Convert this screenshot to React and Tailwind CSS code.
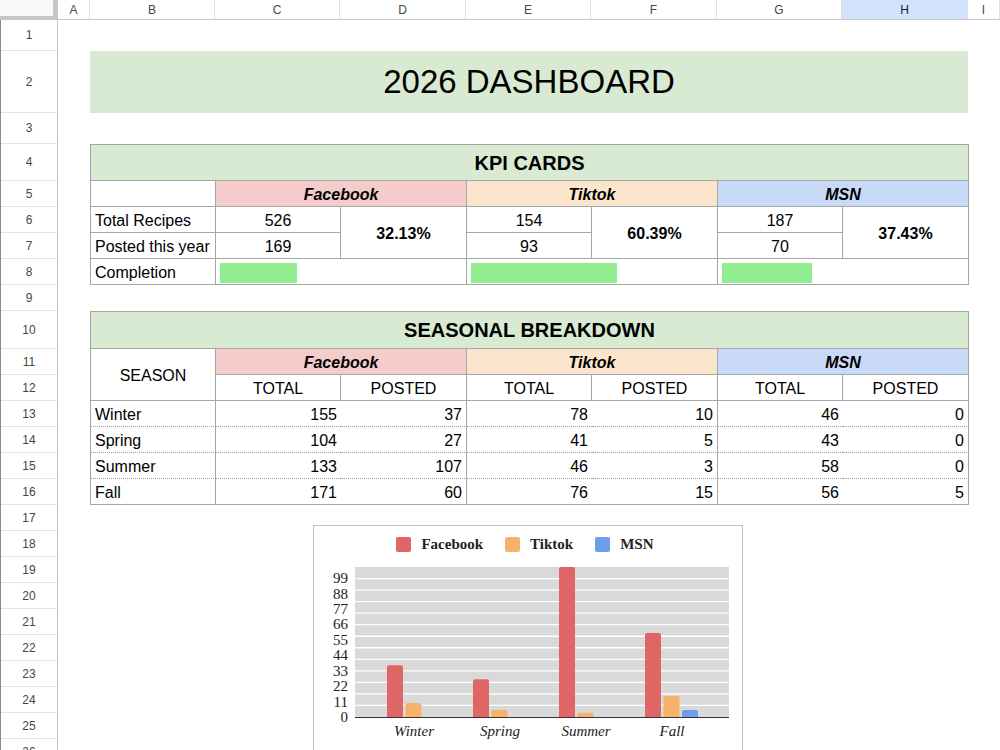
import React from "react";

const COLS = [
  ["A", 32],
  ["B", 125],
  ["C", 125],
  ["D", 126],
  ["E", 125],
  ["F", 126],
  ["G", 125],
  ["H", 126],
  ["I", 32],
];

const ROWS = [31, 62, 31, 37, 26, 26, 26, 26, 26, 38, 26, 26, 26, 26, 26, 26, 26, 26, 26, 26, 26, 26, 26, 26, 26, 26];

const PLATFORMS = [
  { name: "Facebook", bg: "bg-[#f4cccc]", total: 526, posted: 169, pct: "32.13%", ratio: 0.3213 },
  { name: "Tiktok", bg: "bg-[#fce5cd]", total: 154, posted: 93, pct: "60.39%", ratio: 0.6039 },
  { name: "MSN", bg: "bg-[#c9daf8]", total: 187, posted: 70, pct: "37.43%", ratio: 0.3743 },
];

const SEASONS = [
  ["Winter", 155, 37, 78, 10, 46, 0],
  ["Spring", 104, 27, 41, 5, 43, 0],
  ["Summer", 133, 107, 46, 3, 58, 0],
  ["Fall", 171, 60, 76, 15, 56, 5],
];

const SERIES = [
  { name: "Facebook", color: "#e06666", idx: 2 },
  { name: "Tiktok", color: "#f6b26b", idx: 4 },
  { name: "MSN", color: "#6d9eeb", idx: 6 },
];

const GRID_COLS = "grid grid-cols-[125px_125px_126px_125px_126px_125px_126px]";

function ColumnHeaders() {
  return (
    <div className="flex h-[20px] shrink-0">
      <div className="w-[58px] h-[20px] bg-[#f8f9fa] border-r-[5px] border-b-[4px] border-[#c4c7c5]" />
      <div className="flex border-b border-[#c4c7c5] flex-1">
        {COLS.map(([letter, w]) => (
          <div
            key={letter}
            style={{ width: w }}
            className={`shrink-0 flex items-center justify-center border-r border-[#e0e0e0] text-[12px] ${
              letter === "H" ? "bg-[#d3e3fd] text-[#041e49]" : "text-[#444746]"
            }`}
          >
            {letter}
          </div>
        ))}
      </div>
    </div>
  );
}

function RowHeaders() {
  return (
    <div className="w-[58px] shrink-0 border-l border-r border-l-[#8a8a8a] border-r-[#c4c7c5]">
      {ROWS.map((h, i) => (
        <div
          key={i}
          style={{ height: h }}
          className="flex items-center justify-center border-b border-[#e1e1e1] text-[12px] text-[#444746]"
        >
          {i + 1}
        </div>
      ))}
    </div>
  );
}

function KpiCards() {
  return (
    <div className={`${GRID_COLS} grid-rows-[36px_26px_26px_26px_26px] w-[879px] border-l border-t border-[#a6a6a6] text-[16px]`}>
      <div className="col-span-7 flex items-center justify-center bg-[#d9ead3] border-r border-b border-[#a6a6a6] text-[20px] font-bold">
        KPI CARDS
      </div>

      <div className="border-r border-b border-[#a6a6a6]" />
      {PLATFORMS.map((p) => (
        <div
          key={p.name}
          className={`col-span-2 flex items-center justify-center pt-[2px] ${p.bg} border-r border-b border-[#a6a6a6] font-bold italic`}
        >
          {p.name}
        </div>
      ))}

      <div className="flex items-center pl-[4px] pt-[2px] border-r border-b border-[#a6a6a6]">Total Recipes</div>
      {PLATFORMS.map((p) => (
        <React.Fragment key={p.name}>
          <div className="flex items-center justify-center pt-[2px] border-r border-b border-[#a6a6a6]">{p.total}</div>
          <div className="row-span-2 flex items-center justify-center pt-[2px] border-r border-b border-[#a6a6a6] font-bold">
            {p.pct}
          </div>
        </React.Fragment>
      ))}

      <div className="flex items-center pl-[4px] pt-[2px] border-r border-b border-[#a6a6a6] whitespace-nowrap">Posted this year</div>
      {PLATFORMS.map((p) => (
        <div key={p.name} className="flex items-center justify-center pt-[2px] border-r border-b border-[#a6a6a6]">
          {p.posted}
        </div>
      ))}

      <div className="flex items-center pl-[4px] pt-[2px] border-r border-b border-[#a6a6a6]">Completion</div>
      {PLATFORMS.map((p) => (
        <div key={p.name} className="col-span-2 flex items-center pl-[4px] pt-[2px] border-r border-b border-[#a6a6a6]">
          {/* sparkline-style progress bar */}
          <div className="h-[20px] bg-[#90ee90]" style={{ width: `${Math.round(p.ratio * 241)}px` }} />
        </div>
      ))}
    </div>
  );
}

function SeasonalBreakdown() {
  return (
    <div className={`${GRID_COLS} grid-rows-[37px_26px_26px_26px_26px_26px_26px] w-[879px] border-l border-t border-[#a6a6a6] text-[16px]`}>
      <div className="col-span-7 flex items-center justify-center bg-[#d9ead3] border-r border-b border-[#a6a6a6] text-[20px] font-bold">
        SEASONAL BREAKDOWN
      </div>

      <div className="row-span-2 flex items-center justify-center pt-[2px] border-r border-b border-[#a6a6a6]">SEASON</div>
      {PLATFORMS.map((p) => (
        <div
          key={p.name}
          className={`col-span-2 flex items-center justify-center pt-[2px] ${p.bg} border-r border-b border-[#a6a6a6] font-bold italic`}
        >
          {p.name}
        </div>
      ))}

      {PLATFORMS.map((p) => (
        <React.Fragment key={p.name}>
          <div className="flex items-center justify-center pt-[2px] border-r border-b border-[#a6a6a6]">TOTAL</div>
          <div className="flex items-center justify-center pt-[2px] border-r border-b border-[#a6a6a6]">POSTED</div>
        </React.Fragment>
      ))}

      {SEASONS.map((row, r) => {
        const bottom =
          r === SEASONS.length - 1
            ? "border-b border-b-[#a6a6a6]"
            : "border-b border-b-[#a0a0a0] [border-bottom-style:dotted]";
        return (
          <React.Fragment key={row[0]}>
            <div className={`flex items-center pl-[4px] pt-[2px] border-r border-r-[#a6a6a6] ${bottom}`}>{row[0]}</div>
            {row.slice(1).map((v, c) => (
              <div
                key={c}
                className={`flex items-center justify-end pr-[4px] pt-[2px] ${
                  c % 2 === 1 ? "border-r border-r-[#a6a6a6]" : ""
                } ${bottom}`}
              >
                {v}
              </div>
            ))}
          </React.Fragment>
        );
      })}
    </div>
  );
}

// rounded-top bar path for the column chart
function barPath(x, y, w, bottom) {
  const h = bottom - y;
  if (h <= 0) return "";
  const r = Math.min(2, h / 2);
  return `M${x},${bottom} V${y + r} Q${x},${y} ${x + r},${y} H${x + w - r} Q${x + w},${y} ${x + w},${y + r} V${bottom} Z`;
}

function SeasonChart() {
  const left = 41;
  const right = 415;
  const top = 5;
  const bottom = 155;
  const unit = (bottom - top) / 107;
  const groups = [73, 159, 245, 331];
  const offsets = [0, 18.5, 37];

  return (
    <div className="ml-[223px] mt-[20px] w-[430px] h-[260px] border border-[#c0c0c0] bg-white font-['Liberation_Serif','Times_New_Roman',serif] shrink-0">
      <div className="h-[36px] flex items-center justify-center gap-[22px] pr-[6px]">
        {SERIES.map((s) => (
          <div key={s.name} className="flex items-center gap-[10px]">
            <span className="w-[15px] h-[15px] rounded-[2px]" style={{ background: s.color }} />
            <span className="text-[15px] font-bold text-[#222]">{s.name}</span>
          </div>
        ))}
      </div>
      <svg width="428" height="200" className="block">
        <rect x={left} y={top} width={right - left} height={bottom - top} fill="#d9d9d9" />
        {Array.from({ length: 12 }, (_, k) => {
          const y = top + ((k + 1) * (bottom - top)) / 13;
          return <line key={k} x1={left} x2={right} y1={y} y2={y} stroke="#ffffff" strokeWidth="1.3" />;
        })}
        {SEASONS.map((row, g) =>
          SERIES.map((s, i) => (
            <path
              key={`${g}-${i}`}
              d={barPath(groups[g] + offsets[i], bottom - row[s.idx] * unit, 16, bottom)}
              fill={s.color}
            />
          ))
        )}
        <line x1={left} x2={right} y1={bottom + 0.5} y2={bottom + 0.5} stroke="#333333" strokeWidth="1.2" />
        {Array.from({ length: 10 }, (_, k) => {
          const v = k * 11;
          return (
            <text
              key={v}
              x="34"
              y={bottom - v * unit + 5}
              textAnchor="end"
              fontSize="15"
              fill="#222"
              fontFamily="Liberation Serif, serif"
            >
              {v}
            </text>
          );
        })}
        {SEASONS.map((row, g) => (
          <text
            key={row[0]}
            x={groups[g] + 27}
            y="174"
            textAnchor="middle"
            fontSize="15"
            fontStyle="italic"
            fill="#222"
            fontFamily="Liberation Serif, serif"
          >
            {row[0]}
          </text>
        ))}
      </svg>
    </div>
  );
}

export default function App() {
  return (
    <div className="w-[1000px] h-[750px] overflow-hidden bg-white flex flex-col font-['Liberation_Sans',Arial,sans-serif] text-black">
      <ColumnHeaders />
      <div className="flex flex-1 min-h-0">
        <RowHeaders />
        <div className="flex flex-col pl-[32px]">
          <div className="h-[31px] shrink-0" />
          <div className="w-[878px] h-[62px] shrink-0 bg-[#d9ead3] flex items-center justify-center text-[33px]">
            2026 DASHBOARD
          </div>
          <div className="h-[31px] shrink-0" />
          <KpiCards />
          <div className="h-[26px] shrink-0" />
          <SeasonalBreakdown />
          <SeasonChart />
        </div>
      </div>
    </div>
  );
}
